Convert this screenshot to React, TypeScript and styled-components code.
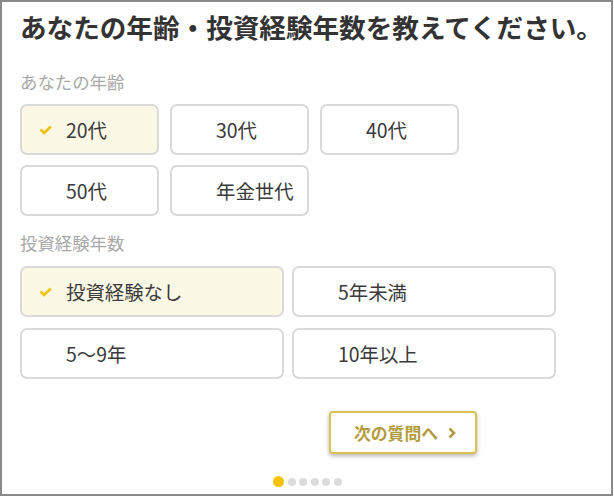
import React, { useState } from "react";
import styled, { createGlobalStyle, css } from "styled-components";

const GlobalStyle = createGlobalStyle`
  html, body { margin: 0; padding: 0; background: #fff; }
  body { font-family: "Noto Sans CJK JP", "Noto Sans", sans-serif; }
  * { box-sizing: border-box; }
`;

const Frame = styled.div`
  width: 613px;
  height: 496px;
  border: 2px solid #8a8a8a;
  background: #fff;
  padding: 8px 18px 0 18px;
  display: flex;
  flex-direction: column;
`;

const Title = styled.h1`
  margin: 0;
  font-size: 26.6px;
  line-height: 34px;
  font-weight: 700;
  color: #333;
  white-space: nowrap;
`;

const SectionLabel = styled.div<{ $top: number }>`
  margin-top: ${(p) => p.$top}px;
  font-size: 17.4px;
  line-height: 24px;
  color: #a8a8a8;
`;

const OptionGrid = styled.div<{ $cols: number; $width: number; $rowGap: number; $colGap: number; $top: number }>`
  margin-top: ${(p) => p.$top}px;
  display: grid;
  grid-template-columns: repeat(${(p) => p.$cols}, ${(p) => p.$width}px);
  column-gap: ${(p) => p.$colGap}px;
  row-gap: ${(p) => p.$rowGap}px;
`;

const Option = styled.button<{ $selected: boolean }>`
  position: relative;
  height: 51px;
  border: 2px solid #d9d9d9;
  border-radius: 7px;
  background: #fff;
  padding: 0 0 0 44px;
  text-align: left;
  font-family: inherit;
  font-size: 19.4px;
  color: #3a3a3a;
  cursor: pointer;
  display: flex;
  align-items: center;
  ${(p) =>
    p.$selected &&
    css`
      background: #fcf8e6;
    `}
`;

const Check = styled.svg`
  position: absolute;
  left: 17px;
  top: 50%;
  margin-top: -5px;
  width: 13px;
  height: 10px;
`;

const Footer = styled.div`
  margin-top: 32px;
  display: flex;
  padding-left: 309px;
`;

const NextButton = styled.button`
  width: 148px;
  height: 43px;
  border: 2px solid #dcc256;
  border-radius: 4px;
  background: #fff;
  box-shadow: 0 2px 4px rgba(0, 0, 0, 0.3);
  color: #b39b3f;
  font-family: inherit;
  font-size: 16.8px;
  font-weight: 700;
  display: flex;
  align-items: center;
  justify-content: center;
  gap: 10px;
  padding: 0 0 0 4px;
  cursor: pointer;
`;

const Dots = styled.div`
  margin-top: 22px;
  display: flex;
  align-items: center;
  justify-content: center;
  gap: 3.5px;
  padding-left: 2px;
`;

const Dot = styled.span<{ $active: boolean }>`
  width: ${(p) => (p.$active ? 11 : 8)}px;
  height: ${(p) => (p.$active ? 11 : 8)}px;
  border-radius: 50%;
  background: ${(p) => (p.$active ? "#f5c300" : "#dcdcdc")};
`;

const CheckIcon = () => (
  <Check viewBox="0 0 13 10">
    <path d="M1.5 4.5 L5.2 8 L11.8 1.5" fill="none" stroke="#f2c200" strokeWidth="2.6" />
  </Check>
);

const ages = ["20代", "30代", "40代", "50代", "年金世代"];
const exps = ["投資経験なし", "5年未満", "5〜9年", "10年以上"];

export default function App() {
  const [age, setAge] = useState("20代");
  const [exp, setExp] = useState("投資経験なし");
  return (
    <>
      <GlobalStyle />
      <Frame>
        <Title>あなたの年齢・投資経験年数を教えてください。</Title>
        <SectionLabel $top={26}>あなたの年齢</SectionLabel>
        <OptionGrid $cols={3} $width={139} $colGap={11} $rowGap={10} $top={10}>
          {ages.map((a) => (
            <Option key={a} $selected={a === age} onClick={() => setAge(a)}>
              {a === age && <CheckIcon />}
              {a}
            </Option>
          ))}
        </OptionGrid>
        <SectionLabel $top={15}>投資経験年数</SectionLabel>
        <OptionGrid $cols={2} $width={264} $colGap={8} $rowGap={11} $top={11}>
          {exps.map((e) => (
            <Option key={e} $selected={e === exp} onClick={() => setExp(e)}>
              {e === exp && <CheckIcon />}
              {e}
            </Option>
          ))}
        </OptionGrid>
        <Footer>
          <NextButton>
            次の質問へ
            <svg width="8" height="12" viewBox="0 0 8 12">
              <path d="M1.5 1.5 L6 6 L1.5 10.5" fill="none" stroke="#b39b3f" strokeWidth="2.6" />
            </svg>
          </NextButton>
        </Footer>
        <Dots>
          {[0, 1, 2, 3, 4, 5].map((i) => (
            <Dot key={i} $active={i === 0} />
          ))}
        </Dots>
      </Frame>
    </>
  );
}
